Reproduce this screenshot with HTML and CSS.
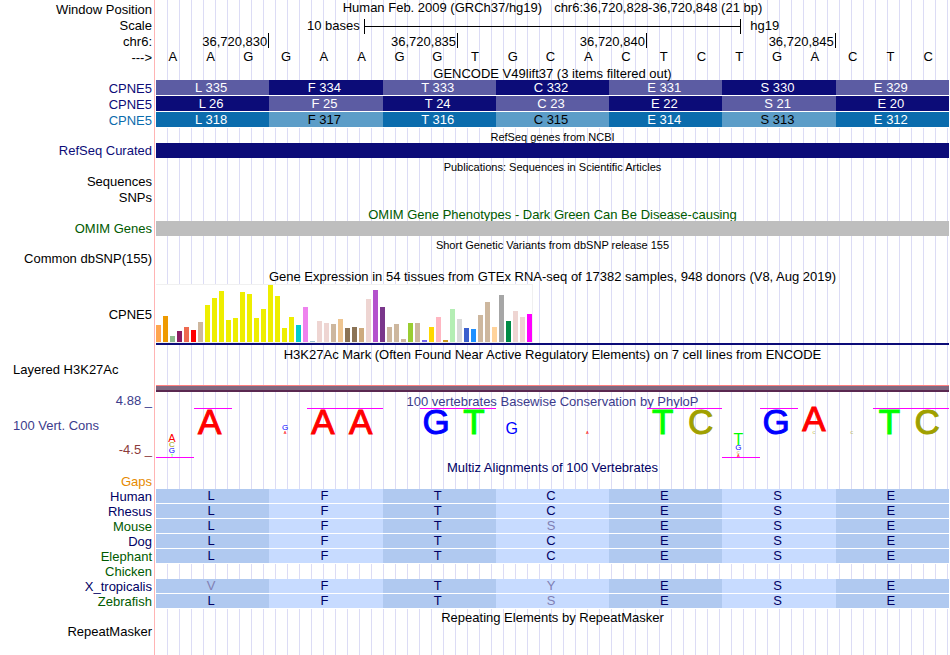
FILE: index.html
```html
<!DOCTYPE html>
<html lang="en">
<head>
    <meta charset="UTF-8">
    <meta name="viewport" content="width=device-width, initial-scale=1.0">
    <title>Human chr6:36,720,828-36,720,848 hg19</title>
    <link rel="stylesheet" href="styles.css">
</head>
<body>
    <main class="browser">
        <!-- Ruler -->
        <section class="ruler">
            <div class="row">
                <div class="label">Window Position</div>
                <h1 class="title position">
                    <span>Human Feb. 2009 (GRCh37/hg19)</span>
                    <span>chr6:36,720,828-36,720,848 (21 bp)</span>
                </h1>
            </div>
            <div class="row">
                <div class="label">Scale</div>
                <div class="scale">
                    <span class="scale-size">10 bases</span>
                    <span class="scale-bar"></span>
                    <span class="scale-db">hg19</span>
                </div>
            </div>
            <div class="row">
                <div class="label">chr6:</div>
                <div class="ticks">
                    <span class="tick first">36,720,830</span>
                    <span class="tick">36,720,835</span>
                    <span class="tick">36,720,840</span>
                    <span class="tick">36,720,845</span>
                </div>
            </div>
            <div class="row">
                <div class="label">---&gt;</div>
                <div class="bases" id="bases"></div>
            </div>
        </section>

        <!-- Genes -->
        <h2 class="title">GENCODE V49lift37 (3 items filtered out)</h2>
        <table class="codons" id="gencode"></table>

        <h2 class="title small">RefSeq genes from NCBI</h2>
        <div class="row">
            <div class="label navy">RefSeq Curated</div>
            <div class="bar navy-bar"></div>
        </div>

        <h2 class="title small spaced">Publications: Sequences in Scientific Articles</h2>
        <div class="row"><div class="label">Sequences</div></div>
        <div class="row"><div class="label">SNPs</div></div>

        <h2 class="title green">OMIM Gene Phenotypes - Dark Green Can Be Disease-causing</h2>
        <div class="row">
            <div class="label green">OMIM Genes</div>
            <div class="bar gray-bar"></div>
        </div>

        <h2 class="title small">Short Genetic Variants from dbSNP release 155</h2>
        <div class="row"><div class="label">Common dbSNP(155)</div></div>

        <!-- Expression -->
        <h2 class="title tall">Gene Expression in 54 tissues from GTEx RNA-seq of 17382 samples, 948 donors (V8, Aug 2019)</h2>
        <div class="row gtex">
            <div class="label">CPNE5</div>
            <div class="gtex-plot">
                <div class="gtex-bars" id="gtex"></div>
            </div>
        </div>

        <!-- Regulation -->
        <h2 class="title tall">H3K27Ac Mark (Often Found Near Active Regulatory Elements) on 7 cell lines from ENCODE</h2>
        <div class="row"><div class="label left">Layered H3K27Ac</div></div>
        <div class="row"><div class="label"></div><div class="signal"></div></div>

        <!-- Conservation -->
        <section class="row cons">
            <div class="cons-labels">
                <span class="label slate">4.88 _</span>
                <span class="label left slate">100 Vert. Cons</span>
                <span class="label brick">-4.5 _</span>
            </div>
            <div class="cons-plot">
                <h2 class="title slate">100 vertebrates Basewise Conservation by PhyloP</h2>
                <div class="logo" id="logo"></div>
            </div>
        </section>

        <!-- Alignments -->
        <h2 class="title tall midnight">Multiz Alignments of 100 Vertebrates</h2>
        <div class="row gaps"><div class="label orange">Gaps</div></div>
        <table class="codons align" id="align"></table>

        <h2 class="title">Repeating Elements by RepeatMasker</h2>
        <div class="row"><div class="label">RepeatMasker</div></div>
    </main>
    <script src="script.js"></script>
</body>
</html>
```

FILE: styles.css
```css
* {
    box-sizing: border-box;
}

body {
    margin: 0;
    background: #fff;
    color: #000;
    font-family: "Liberation Sans", Arial, Helvetica, sans-serif;
    font-size: 13px;
    line-height: 16px;
}

.browser {
    min-height: 100vh;
    padding-right: 1px;
    background:
        linear-gradient(#ffb4b4, #ffb4b4) 154px 0 / 1px 100% no-repeat,
        repeating-linear-gradient(to right, transparent 0 11px, #dcdcf5 11px 12px) 156px 0 no-repeat;
}

.row {
    display: grid;
    grid-template-columns: 152px 1fr;
    column-gap: 4px;
}

.label {
    text-align: right;
    white-space: nowrap;
}

.label.left {
    padding-left: 13px;
    text-align: left;
}

.title {
    height: 15px;
    margin: 0 0 0 156px;
    font-size: 13px;
    font-weight: normal;
    line-height: 18px;
    text-align: center;
    white-space: nowrap;
}

.title.small {
    font-size: 11px;
}

.title.tall {
    height: 17px;
    line-height: 20px;
}

.title.spaced {
    height: 16px;
}

.navy { color: #0c0c78; }
.midnight { color: #000064; }
.green { color: #005a00; }
.orange { color: #e68a00; }
.slate { color: #3c3c8c; }
.brick { color: #8c3c3c; }

/* Ruler */
.ruler {
    padding-top: 1px;
}

.ruler .row {
    height: 16px;
}

.ruler .label {
    line-height: 18px;
}

.ruler .title {
    margin: 0;
    line-height: 14px;
}

.position {
    display: flex;
    justify-content: center;
    gap: 12px;
}

.scale {
    display: grid;
    grid-template-columns: 11fr 20fr 11fr;
    align-items: center;
}

.scale-size {
    padding-right: 4px;
    text-align: right;
}

.scale-db {
    padding-left: 9px;
}

.scale-bar {
    height: 15px;
    border: solid #000;
    border-width: 0 1px;
    background: linear-gradient(#000, #000) 0 7px / 100% 1px no-repeat;
}

.ticks,
.bases,
.logo {
    display: grid;
    grid-template-columns: repeat(21, 1fr);
}

.tick {
    grid-column: span 5;
    height: 15px;
    padding-right: 1px;
    border-right: 1px solid #000;
    text-align: right;
    line-height: 18px;
}

.tick.first {
    grid-column: span 3;
}

.bases span {
    padding-right: 4px;
    text-align: center;
}

/* Codon tables */
.codons {
    width: 100%;
    table-layout: fixed;
    border-spacing: 0;
}

.codons th {
    width: 156px;
    padding: 0 4px 0 0;
    font-weight: normal;
    text-align: right;
    line-height: 15px;
}

.codons td {
    padding: 0 3px 0 0;
    border-bottom: 1px solid #fff;
    color: #fff;
    text-align: center;
    line-height: 15px;
}

.codons .dark { background: #0c0c78; }
.codons .light { background: #5c5ca3; }
.codons .blue th { color: #0b6cad; }
.codons .blue .dark { background: #0b6cad; }
.codons .blue .light { background: #5c9dc8; color: #000; }

.align td {
    line-height: 14px;
    color: #000064;
}

.align .empty { border: 0; }
.align .dark { background: #b0c9f0; }
.align .light { background: #c7dbff; }
.align .differs { color: #8080b4; }

.gaps {
    height: 14px;
    line-height: 14px;
}

/* Solid item bars */
.bar {
    height: 15px;
}

.row:has(.bar) {
    line-height: 15px;
}

.navy-bar { background: #0c0c78; }
.gray-bar { background: #bebebe; }

/* GTEx */
.gtex {
    align-items: center;
}

.gtex-plot {
    border-bottom: 2px solid #0c0c78;
}

.gtex-bars {
    display: flex;
    align-items: flex-end;
    gap: 2px;
    width: max-content;
    height: 59px;
    border: 1px solid #f0f0f0;
    border-left: 0;
    background: #fff;
}

.gtex-bars span {
    width: 5px;
}

.signal {
    height: 7px;
    margin-top: 7px;
    border-top: 1px solid #ff8080;
    border-bottom: 2px solid #5a2850;
    background: #806880;
}

/* Conservation */
.cons-labels {
    display: flex;
    flex-direction: column;
    justify-content: space-between;
    padding-top: 1px;
}

.cons-plot .title {
    height: 16px;
    margin: 0;
    line-height: 20px;
}

.stack {
    display: grid;
    grid-template-rows: 26px 24px;
    padding-right: 6px;
    text-align: center;
}

.up,
.down {
    display: flex;
    flex-direction: column;
}

.up {
    justify-content: flex-end;
}

.clip-top,
.clip-bottom {
    margin-right: -6px;
    padding-right: 6px;
}

.clip-top { border-top: 1px solid #f0f; }
.clip-bottom { border-bottom: 1px solid #f0f; }

.A { color: #f00; }
.C { color: #a0a000; }
.G { color: #00f; }
.T { color: #0f0; }

.h25 { font-size: 35px; line-height: 25px; -webkit-text-stroke: 1px currentColor; }
.h11 { font-size: 16px; line-height: 11px; }
.h8 { font-size: 11px; line-height: 8px; }
.h6 { font-size: 8px; line-height: 6px; }
.h3 { font-size: 4px; line-height: 3px; }
```

FILE: script.js
```js
// Bases of the window
const bases = document.getElementById('bases');
for (const base of 'AAGGAAGGTGCACTCTGACTC') {
    bases.innerHTML += `<span>${base}</span>`;
}

// GENCODE transcripts, one codon per cell
const transcripts = [
    { color: '', first: 'light', start: 335 },
    { color: '', first: 'dark', start: 26 },
    { color: 'blue', first: 'dark', start: 318 }
];

function shade(first, i) {
    const other = first === 'dark' ? 'light' : 'dark';
    return i % 2 === 0 ? first : other;
}

let html = '';
for (const t of transcripts) {
    html += `<tr class="${t.color}"><th scope="row" class="navy">CPNE5</th>`;
    [...'LFTCESE'].forEach((aa, i) => {
        html += `<td class="${shade(t.first, i)}">${aa} ${t.start - i}</td>`;
    });
    html += '</tr>';
}
document.getElementById('gencode').innerHTML = html;

// Multiz alignment
const species = [
    ['Human', 'LFTCESE', 'midnight'],
    ['Rhesus', 'LFTCESE', 'midnight'],
    ['Mouse', 'LFTSESE', 'green'],
    ['Dog', 'LFTCESE', 'midnight'],
    ['Elephant', 'LFTCESE', 'green'],
    ['Chicken', '', 'green'],
    ['X_tropicalis', 'VFTYESE', 'midnight'],
    ['Zebrafish', 'LFTSESE', 'green']
];

html = '';
for (const [name, seq, color] of species) {
    html += `<tr><th scope="row" class="${color}">${name}</th>`;
    if (!seq) html += '<td class="empty" colspan="7"></td>';
    [...seq].forEach((aa, i) => {
        const differs = aa !== 'LFTCESE'[i] ? ' differs' : '';
        html += `<td class="${shade('dark', i)}${differs}">${aa}</td>`;
    });
    html += '</tr>';
}
document.getElementById('align').innerHTML = html;

// GTEx tissues: bar height, color
const tissues = [
    [17, '#ffa54f'], [26, '#ee9a00'], [6, '#8fbc8f'], [11, '#8b1c62'], [15, '#ee6a50'],
    [12, '#ff0000'], [20, '#cdb79e'], [37, '#eeee00'], [44, '#eeee00'], [51, '#eeee00'],
    [22, '#eeee00'], [24, '#eeee00'], [50, '#eeee00'], [48, '#eeee00'], [24, '#eeee00'],
    [33, '#eeee00'], [57, '#eeee00'], [46, '#eeee00'], [14, '#eeee00'], [25, '#eeee00'],
    [17, '#00cdcd'], [35, '#ee82ee'], [1, '#9ac0cd'], [21, '#eed5d2'], [19, '#eed5d2'],
    [18, '#cdb79e'], [23, '#eec591'], [14, '#8b7355'], [15, '#8b7355'], [14, '#cdaa7d'],
    [43, '#eed5d2'], [52, '#b452cd'], [35, '#7a378b'], [15, '#cdb79e'], [18, '#cdb79e'],
    [3, '#cdb79e'], [19, '#9acd32'], [19, '#cdb79e'], [2, '#7a67ee'], [15, '#ffd700'],
    [25, '#ffb6c1'], [2, '#cd9b1d'], [33, '#b4eeb4'], [23, '#d9d9d9'], [14, '#3a5fcd'],
    [13, '#1e90ff'], [27, '#cdb79e'], [40, '#cdb79e'], [15, '#ffd39b'], [47, '#a6a6a6'],
    [21, '#008b45'], [31, '#eed5d2'], [25, '#eed5d2'], [28, '#ff00ff']
];

const gtex = document.getElementById('gtex');
for (const [height, color] of tissues) {
    gtex.innerHTML += `<span style="height: ${height}px; background: ${color}"></span>`;
}

// PhyloP logo: letters above and below zero, "|" marks a clipped score
const columns = [
    ['', 'A8 C6 G6 T3 |'], ['| A25', ''], ['', ''], ['G6 A3', ''], ['| A25', ''],
    ['| A25', ''], ['', ''], ['| G25', ''], ['| T25', ''], ['G11', ''], ['', ''],
    ['A3', ''], ['', ''], ['| T25', ''], ['| C25', ''], ['', 'T11 G6 C3 A3 |'],
    ['| G25', ''], ['A25 C3', ''], ['C3', ''], ['| T25', ''], ['| C25', '']
];

function letters(text) {
    return text.split(' ').filter(s => s && s !== '|')
        .map(s => `<span class="${s[0]} h${s.slice(1)}">${s[0]}</span>`).join('');
}

const logo = document.getElementById('logo');
for (const [up, down] of columns) {
    logo.innerHTML += `<div class="stack">
        <div class="up ${up.includes('|') ? 'clip-top' : ''}">${letters(up)}</div>
        <div class="down ${down.includes('|') ? 'clip-bottom' : ''}">${letters(down)}</div>
    </div>`;
}
```
